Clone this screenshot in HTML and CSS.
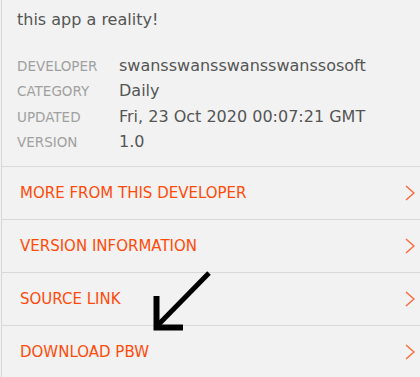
FILE: index.html
```html
<!DOCTYPE html>
<html>
<head>
<meta charset="utf-8">
<link rel="stylesheet" href="styles.css">
</head>
<body>
<div class="panel">
  <p class="desc">Hope it is worth it. Thanks to all who made<br>this app a reality!</p>
  <dl class="meta">
    <div class="meta-row"><dt>Developer</dt><dd>swansswansswansswanssosoft</dd></div>
    <div class="meta-row"><dt>Category</dt><dd>Daily</dd></div>
    <div class="meta-row"><dt>Updated</dt><dd>Fri, 23 Oct 2020 00:07:21 GMT</dd></div>
    <div class="meta-row"><dt>Version</dt><dd>1.0</dd></div>
  </dl>
  <ul class="links">
    <li class="link"><span>More from this developer</span><svg class="chev" viewBox="0 0 10 16"><path d="M1 1 L9 8 L1 15"/></svg></li>
    <li class="link"><span>Version information</span><svg class="chev" viewBox="0 0 10 16"><path d="M1 1 L9 8 L1 15"/></svg></li>
    <li class="link"><span>Source link</span><svg class="chev" viewBox="0 0 10 16"><path d="M1 1 L9 8 L1 15"/></svg></li>
    <li class="link"><span>Download PBW</span><svg class="chev" viewBox="0 0 10 16"><path d="M1 1 L9 8 L1 15"/></svg></li>
  </ul>
  <svg class="arrow" viewBox="0 0 80 80" width="80" height="80"><path class="shaft" d="M67 13 L16 65"/><path class="head" d="M14.5 36 V67.5 H41"/></svg>
</div>
</body>
</html>
```

FILE: styles.css
```css
html, body {
  margin: 0;
  padding: 0;
  background: #f2f2f2;
  height: 100%;
  overflow: hidden;
}
.panel {
  position: relative;
  display: flow-root;
  margin-left: 1px;
  border-left: 1px solid #d8d8d8;
  min-height: 100%;
  font-family: "DejaVu Sans", sans-serif;
  color: #555;
}
.desc {
  margin: -25px 0 0;
  padding: 0 16px 0 15px;
  font-size: 16px;
  line-height: 30px;
  color: #555;
  white-space: nowrap;
}
.meta {
  margin: 20.5px 0 0;
  padding: 0 0 8px 15px;
}
.meta-row {
  display: flex;
  align-items: baseline;
  height: 25.6px;
}
.meta dt {
  width: 102px;
  font-size: 13.5px;
  text-transform: uppercase;
  color: #a0a0a0;
}
.meta dd {
  margin: 0;
  font-size: 16px;
  color: #555;
}
.links {
  list-style: none;
  margin: 0;
  padding: 0;
}
.link {
  display: flex;
  align-items: center;
  justify-content: space-between;
  height: 52px;
  border-top: 1px solid #d9d9d9;
  padding: 0 5px 0 18px;
  font-size: 15px;
  text-transform: uppercase;
  color: #ff4b0a;
}
.chev {
  width: 10px;
  height: 16px;
  fill: none;
  stroke: #ff6a3a;
  stroke-width: 1.5;
}
.arrow {
  position: absolute;
  left: 140px;
  top: 260px;
  fill: none;
  stroke: #000;
}
.arrow .shaft {
  stroke-width: 5;
}
.arrow .head {
  stroke-width: 6;
  stroke-linejoin: miter;
}
```
